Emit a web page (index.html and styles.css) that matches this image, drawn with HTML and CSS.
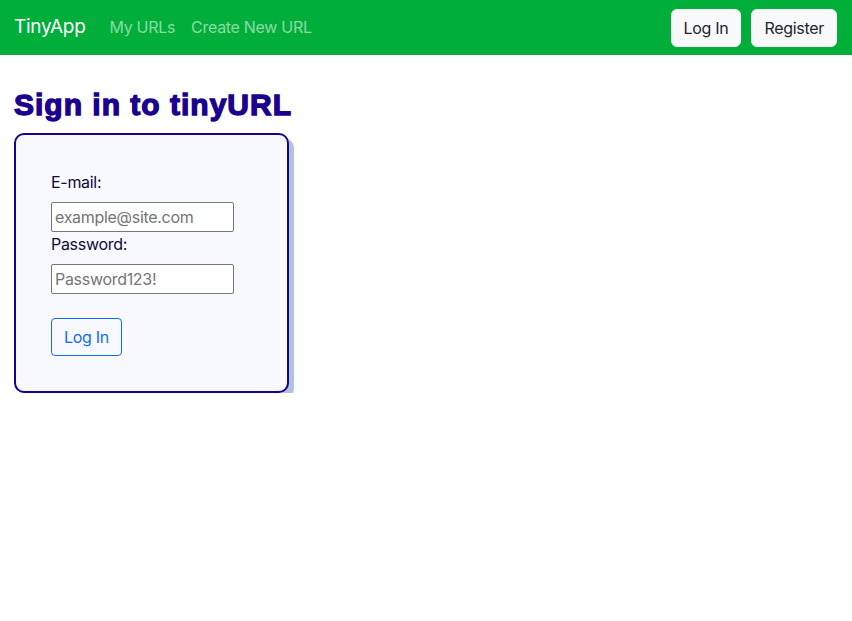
FILE: index.html
```html
<!DOCTYPE html>
<html lang="en">
<head>
<meta charset="utf-8">
<title>TinyApp - Sign in</title>
<link rel="stylesheet" href="styles.css">
</head>
<body>
<nav class="navbar">
  <div class="nav-left">
    <a class="brand" href="#">TinyApp</a>
    <a class="nav-link" href="#">My URLs</a>
    <a class="nav-link" href="#">Create New URL</a>
  </div>
  <div class="nav-right">
    <button class="btn btn-light" type="button">Log In</button>
    <button class="btn btn-light" type="button">Register</button>
  </div>
</nav>
<main class="main">
  <h1 class="title">Sign in to tinyURL</h1>
  <form class="card">
    <label class="label" for="email">E-mail:</label>
    <input class="input" id="email" type="text" placeholder="example@site.com">
    <label class="label" for="password">Password:</label>
    <input class="input" id="password" type="password" placeholder="Password123!">
    <button class="btn btn-outline" type="button">Log In</button>
  </form>
</main>
</body>
</html>
```
FILE: styles.css
```css
* { box-sizing: border-box; }
body {
  margin: 0;
  font-family: Inter, "Noto Sans", "Liberation Sans", sans-serif;
  font-size: 16px;
  line-height: 24px;
  letter-spacing: -0.3px;
  color: #212529;
  background: #fff;
}
.navbar {
  height: 55px;
  background: #00ae3a;
  display: flex;
  align-items: center;
  justify-content: space-between;
  padding: 0 15px 0 14px;
}
.nav-left { display: flex; align-items: center; padding-bottom: 1px; }
.brand {
  color: #fff;
  font-size: 19px;
  text-decoration: none;
  margin-right: 24px;
}
.nav-link {
  color: rgba(255,255,255,0.55);
  text-decoration: none;
  margin-right: 16px;
}
.nav-right { display: flex; gap: 10px; }
.btn {
  font-family: inherit;
  font-size: 16px;
  line-height: 24px;
  letter-spacing: -0.3px;
  height: 38px;
  padding: 6px 12px;
  border-radius: 6px;
  border: 1px solid transparent;
  cursor: pointer;
}
.btn-light {
  background: #f8f9fa;
  border-color: #f8f9fa;
  color: #212529;
}
.main { padding: 0 14px; }
.title {
  font-family: "Liberation Sans", Arial, sans-serif;
  font-weight: 900;
  font-size: 30px;
  line-height: 36px;
  color: #1b0090;
  -webkit-text-stroke: 1.3px #1b0090;
  margin: 32px 0 10px 0;
  letter-spacing: 1px;
}
.card {
  width: 275px;
  padding: 35px;
  background: #f8f8ff;
  border: 2px solid #1b0090;
  border-radius: 10px;
  box-shadow: 5px 5px 0 #b0c4de;
  display: flex;
  flex-direction: column;
  align-items: flex-start;
}
.label {
  color: #0e0b3a;
  margin-bottom: 8px;
}
.input {
  width: 183px;
  height: 30px;
  font-family: inherit;
  font-size: 16px;
  letter-spacing: -0.3px;
  padding: 1px 3px;
  border: 1px solid #767676;
  border-radius: 2px;
  background: #fff;
  color: #212529;
}
.input::placeholder { color: #757575; }
.btn-outline {
  margin-top: 24px;
  background: transparent;
  color: #0d6efd;
  border-color: #0d6efd;
  border-radius: 4px;
}
```
